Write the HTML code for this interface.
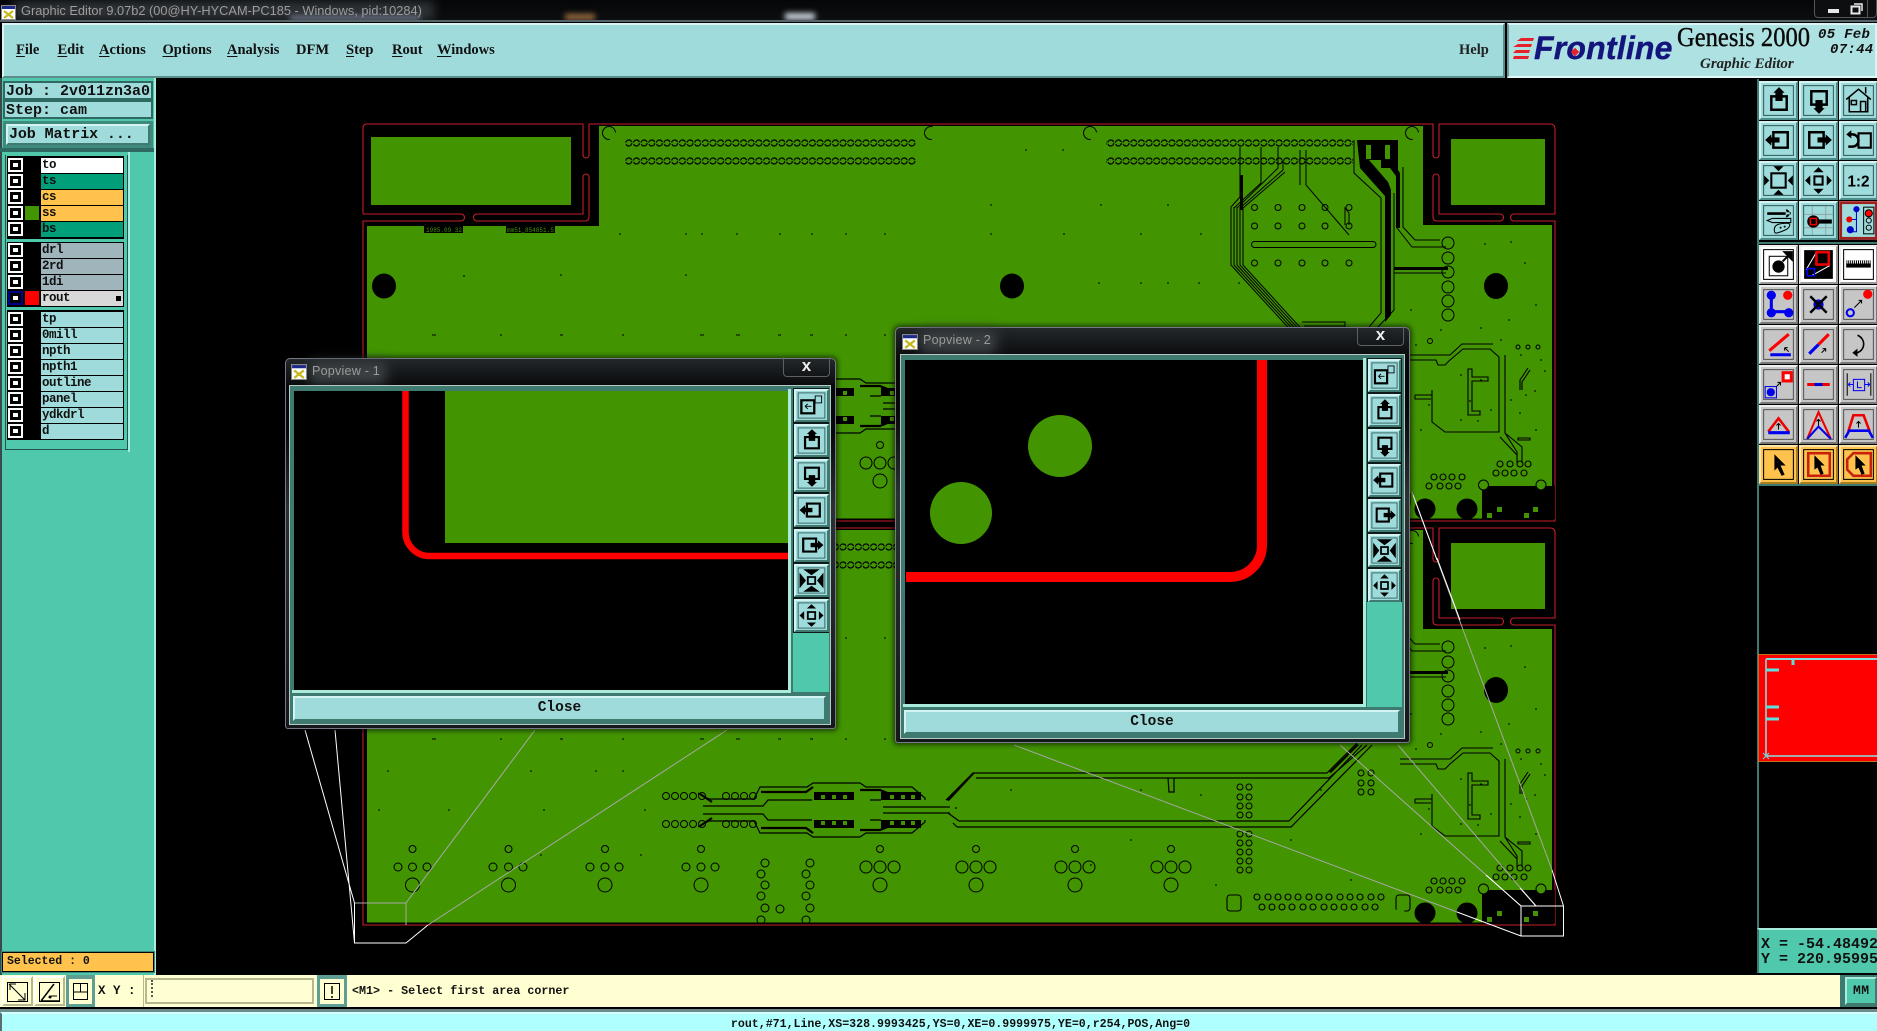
<!DOCTYPE html>
<html><head><meta charset="utf-8"><title>Graphic Editor</title>
<style>
html,body{margin:0;padding:0;background:#000;width:1877px;height:1031px;overflow:hidden}
body{position:relative;font-family:"Liberation Mono",monospace}
div,span,svg{position:absolute;box-sizing:border-box}
.m{font:bold 14.5px "Liberation Serif",serif;color:#111;top:42px;white-space:nowrap}
.m u{position:static;text-underline-offset:2px}
.mono{font-family:"Liberation Mono",monospace;font-weight:bold;color:#111;white-space:pre}
.cb{left:8px;width:15px;height:14px;background:#fff}
.cb::after{content:"";position:absolute;left:2px;top:2px;width:11px;height:10px;border:3px solid #000;background:#fff;box-sizing:border-box}
.sw{left:25px;width:14px;height:14px}
.nm{left:41px;width:82px;height:15px;background:#9fdbdb;font:bold 12.5px/15px "Liberation Mono",monospace;color:#111;padding-left:1px;white-space:pre;letter-spacing:-.5px}
.b{width:39px;height:39px;background:#9fdbdb;border:2px solid;border-color:#d4f3f3 #4f8d8d #4f8d8d #d4f3f3}
.g{background:#c6c6c6;border-color:#eee #777 #777 #eee}
.w{background:#fff;border-color:#eee #999 #999 #eee}
.o{background:#ffc34d;border-color:#ffe5a8 #a87d20 #a87d20 #ffe5a8}
.b svg{left:-2px;top:-2px;width:39px;height:39px}
.t{width:35px;height:33px;background:#9fdbdb;border:2px solid;border-color:#d4f3f3 #3e7a70 #3e7a70 #d4f3f3}
.t svg{left:-2px;top:-2px;width:35px;height:33px}
.pop{background:linear-gradient(#23282b 0,#060708 8%,#060708 20%,#2b3032 40%,#15181a 100%);border:1px solid #778;border-radius:5px 5px 3px 3px;box-shadow:0 0 5px 2px rgba(0,0,0,.55)}
.pt{font:12.6px "Liberation Sans",sans-serif;color:#9a9a9a;white-space:nowrap;letter-spacing:.2px}
.cl{background:#9fdbdb;border:2px solid;border-color:#d4f3f3 #3e7a70 #3e7a70 #d4f3f3;font:bold 14.5px "Liberation Mono",monospace;color:#111;text-align:center}
</style></head><body>

<svg width="0" height="0" style="left:0;top:0">
<defs>
<pattern id="rr" width="7.65" height="18" patternUnits="userSpaceOnUse" patternTransform="translate(625 138)"><circle cx="3.8" cy="5" r="3" fill="none" stroke="#000" stroke-width="1.200" stroke-dasharray="8 1.500"/></pattern>
<symbol id="i-up" viewBox="0 0 38 38"><rect x="4.5" y="4.5" width="29" height="29" fill="none" stroke="#2f5c5c"/><path d="M12 15h15v13H12z" fill="none" stroke="#000" stroke-width="2.400"/><path d="M19.5 6l5.500 5.500h-2v8h-7v-8h-2z"/></symbol>
<symbol id="i-down" viewBox="0 0 38 38"><rect x="4.5" y="4.5" width="29" height="29" fill="none" stroke="#2f5c5c"/><path d="M12 10h15v13H12z" fill="none" stroke="#000" stroke-width="2.400"/><path d="M19.5 32l5.500-5.500h-2v-8h-7v8h-2z"/></symbol>
<symbol id="i-left" viewBox="0 0 38 38"><rect x="4.5" y="4.5" width="29" height="29" fill="none" stroke="#2f5c5c"/><path d="M14 11h14v15H14z" fill="none" stroke="#000" stroke-width="2.400"/><path d="M6 18.500l6-5.500v3h8v5h-8v3z"/></symbol>
<symbol id="i-right" viewBox="0 0 38 38"><rect x="4.5" y="4.5" width="29" height="29" fill="none" stroke="#2f5c5c"/><path d="M10 11h14v15H10z" fill="none" stroke="#000" stroke-width="2.400"/><path d="M32 18.500l-6-5.500v3h-8v5h8v3z"/></symbol>
<symbol id="i-undo" viewBox="0 0 38 38"><rect x="4.5" y="4.5" width="29" height="29" fill="none" stroke="#2f5c5c"/><path d="M19 12h12v14H19z" fill="none" stroke="#000" stroke-width="2"/><path d="M11 13h2a5.500 5.500 0 0 1 0 12h-4" fill="none" stroke="#000" stroke-width="2.400"/><path d="M7 13l5-4v8z"/></symbol>
<symbol id="i-fit" viewBox="0 0 38 38"><rect x="4.5" y="4.5" width="29" height="29" fill="none" stroke="#2f5c5c"/><rect x="12" y="12" width="14" height="14" fill="none" stroke="#000" stroke-width="2"/><path d="M14 5h10l-5 5zM14 33h10l-5-5zM5 14v10l5-5zM33 14v10l-5-5z"/></symbol>
<symbol id="i-pan" viewBox="0 0 38 38"><rect x="4.5" y="4.5" width="29" height="29" fill="none" stroke="#2f5c5c"/><rect x="15" y="15" width="8" height="8" fill="none" stroke="#000" stroke-width="2"/><path d="M19 6l5 5H14zM19 32l5-5H14zM6 19l5-5v10zM32 19l-5-5v10z"/></symbol>
<symbol id="i-win" viewBox="0 0 38 38"><rect x="4.5" y="4.5" width="29" height="29" fill="none" stroke="#2f5c5c"/><rect x="8" y="13" width="14" height="15" fill="none" stroke="#000" stroke-width="2.500"/><rect x="23" y="8" width="7" height="8" fill="none" stroke="#000"/><path d="M12 20h7M12 20l3-3M12 20l3 3" stroke="#000" fill="none"/></symbol>
<symbol id="i-fit2" viewBox="0 0 38 38"><rect x="4.5" y="4.5" width="29" height="29" fill="none" stroke="#2f5c5c"/><rect x="15" y="15" width="8" height="8" fill="none" stroke="#000" stroke-width="2"/><path d="M10 6h18l-9 7zM10 32h18l-9-7zM6 10v18l7-9zM32 10v18l-7-9z"/></symbol>
</defs>
</svg>

<!-- main canvas -->
<svg style="left:0;top:0" width="1877" height="1031" viewBox="0 0 1877 1031">
<defs>
<g id="sec">
 <g fill="none" stroke="#000" stroke-width="1.200">
  <path d="M698 793L709 799H754L760 787H807L813 783H860L866 787H912L925 798V800"/>
  <path d="M703 806H763L768 800H812M883 807H950M870 800H881"/>
 </g>
 <g fill="none" stroke="#000" stroke-width="2.200">
  <path d="M761 792H806L813 787M860 790H880L890 794M712 802L700 794"/>
 </g>
 <path d="M814 792H854V800H814zM881 792H921V800H881z"/>
 <path d="M821 795h4v4h-4zM832 795h4v4h-4zM843 795h4v4h-4zM890 795h4v4h-4zM901 795h4v4h-4zM911 795h4v4h-4z" fill="#429400"/>
</g>
<g id="bd">
 <rect x="367" y="125" width="1185" height="393.500" fill="#429400"/>
 <rect x="363" y="122" width="236" height="104" fill="#000"/>
 <rect x="1423" y="122" width="132" height="103" fill="#000"/>
 <rect x="599" y="122" width="824" height="4" fill="#000"/>
 <rect x="371" y="137" width="200" height="68" fill="#429400"/>
 <rect x="1451" y="139" width="94" height="66" fill="#429400"/>
 <g fill="none" stroke="#c41e2a" stroke-width="1.100">
 <path d="M363 214V128q0-4 4-4H583V155a3 3 0 0 0 6 0V124H1433V155a3 3 0 0 0 6 0V124H1550q5 0 5 5V214H1514a3.500 3.500 0 0 0 0 7H1555V521H363V221H461a3.500 3.500 0 0 0 0-7H363"/>
 <path d="M477 214a3.500 3.500 0 0 0 0 7H585q4 0 4-4V177a3 3 0 0 0-6 0V214H477"/>
 <path d="M1500 214H1439V177a3 3 0 0 0-6 0V217q0 4 4 4H1500a3.500 3.500 0 0 0 0-7"/>
 </g>
 <!-- ring rows -->
 <rect x="625" y="138" width="291" height="28" fill="url(#rr)"/>
 <rect x="1106" y="138" width="247" height="28" fill="url(#rr)"/>
 <g fill="none" stroke="#000" stroke-width="1">
  <circle cx="609" cy="133" r="6.500" stroke-dasharray="22 10" transform="rotate(160 609 133)"/><circle cx="931" cy="133" r="6.500" stroke-dasharray="14 18" transform="rotate(160 931 133)"/><circle cx="1090" cy="133" r="6.500" stroke-dasharray="22 10" transform="rotate(160 1090 133)"/><circle cx="1412" cy="133" r="6.500" stroke-dasharray="22 10" transform="rotate(160 1412 133)"/>
  <circle cx="1254.500" cy="207.500" r="3"/><circle cx="1278" cy="207.500" r="3"/><circle cx="1302" cy="207.500" r="3"/><circle cx="1325" cy="207.500" r="3"/><circle cx="1349" cy="207.500" r="3"/>
  <circle cx="1254.500" cy="226" r="3"/><circle cx="1278" cy="226" r="3"/><circle cx="1302" cy="226" r="3"/><circle cx="1325" cy="226" r="3"/><circle cx="1349" cy="226" r="3"/>
  <circle cx="1254.500" cy="263" r="3"/><circle cx="1278" cy="263" r="3"/><circle cx="1302" cy="263" r="3"/><circle cx="1325" cy="263" r="3"/><circle cx="1349" cy="263" r="3"/>
  <rect x="1251.500" y="241.500" width="124.500" height="6" rx="3"/>
  <circle cx="1448" cy="243" r="6"/><circle cx="1448" cy="258" r="6"/><circle cx="1448" cy="272" r="6"/><circle cx="1448" cy="287" r="6"/><circle cx="1448" cy="301" r="6"/><circle cx="1448" cy="315" r="6"/>
  <!-- octagon bus -->
  <path d="M1231 207L1240 197V147M1234 208L1261 183V147M1237 208L1278 168V147M1240 208L1283 170V160M1243 208L1285 172"/>
  <path d="M1231 207V265L1295 335M1234 207V265L1298 335M1237 207V265L1301 335M1240 207V265L1304 335M1243 207V265L1307 335"/>
  <path d="M1302 322H1345V327M1304 326H1345"/>
  <path d="M1306 150V185L1349 235M1300 150V172V185"/>
  <path d="M1349 225V213L1345 208V225"/>
  <path d="M1354 140V173L1381 198V313L1369 327"/>
  <path d="M1394 193V310L1378 327M1403 167V227L1415 240H1440M1397 228L1412 247H1446"/>
  <path d="M1394 273H1446"/>
 </g>
 <path d="M1240 175h3v35h-3z"/>
 <path d="M1357 140H1398V170L1400 173V228H1396V176L1390 168H1381V160H1369L1388 182L1391 190V315L1385 322V196L1360 168z"/>
 <path d="M1394 267h54v3h-54z"/>
 <path d="M1366 145h5v14h-5zM1385 145h5v14h-5z" fill="#429400"/>
 <!-- holes -->
 <ellipse cx="384" cy="286" rx="12" ry="12.500"/><ellipse cx="1012" cy="286" rx="12" ry="12.500"/><ellipse cx="1496" cy="286" rx="12" ry="13"/>
 <!-- ticks -->
 <path d="M619 234h2M685 234h2M702 233v2M736 234h2M779 234h2M811 234h2M845 234h2M884 234h2M464 275v2M560 275h2M685 275h2M432 335h2M500 335h2M561 335h2M622 335h2M702 335h2M736 335h2M779 335h2M811 335h2M845 335h2M884 335h2M990 234h2M1063 234h2M1140 234h2M1200 234h2M1098 283h2M1140 283h2M1167 283h2M1198 283h2M1238 283h2M990 205h2M1100 205h2M1167 205h2M1025 150h2M1062 150h2M1484 244h2M1510 242h2M1525 262v2M1410 310h2M1440 330h2M1480 328h2M1500 340h2M1508 320h2M1535 305h2M1520 355h2M1540 360h2M1545 370v2M1460 375h2M1480 380h2M1535 390v2M1470 400v2M1510 400h2M1525 395h2M1460 420h2M1478 420v2M1490 410h2M1520 412v2M1535 430h2M1428 405h2M1420 430h2M1415 345h2" stroke="#000" fill="none"/>
 <circle cx="1430" cy="341" r="2.500" fill="none" stroke="#000"/>
 <circle cx="1518" cy="347" r="2" fill="none" stroke="#000"/><circle cx="1528" cy="347" r="2" fill="none" stroke="#000"/><circle cx="1538" cy="347" r="2" fill="none" stroke="#000"/>
 <!-- lower right traces -->
 <g fill="none" stroke="#000" stroke-width="1.100">
  <path d="M1400 355H1450L1462 344H1493"/>
  <path d="M1400 360H1436L1438 365H1445L1450 360L1463 349H1490L1499 357V432H1445L1432 422V390"/>
  <path d="M1415 395H1432M1415 395V399H1431"/>
  <path d="M1505 355V433L1517 452V463M1500 437L1517 455M1522 463V447L1505 433"/>
  <path d="M1468 369V415H1480V411H1472V381H1488V377H1472V369z"/>
  <path d="M1530 370L1522 382V390M1528 368L1520 380V390"/>
  <path d="M1518 440H1530V438H1518z"/>
  <circle cx="1500" cy="464" r="3"/><circle cx="1510" cy="464" r="3"/><circle cx="1520" cy="464" r="3"/><circle cx="1528" cy="464" r="3"/>
  <circle cx="1496" cy="473" r="3"/><circle cx="1505" cy="473" r="3"/><circle cx="1514" cy="473" r="3"/><circle cx="1524" cy="473" r="3"/>
  <circle cx="1434" cy="477" r="3"/><circle cx="1443" cy="477" r="3"/><circle cx="1452" cy="477" r="3"/><circle cx="1462" cy="477" r="3"/>
  <circle cx="1429" cy="486" r="3"/><circle cx="1440" cy="486" r="3"/><circle cx="1449" cy="486" r="3"/><circle cx="1458" cy="486" r="3"/>
  <circle cx="1257" cy="493" r="3"/><circle cx="1268" cy="493" r="3"/><circle cx="1278" cy="493" r="3"/><circle cx="1288" cy="493" r="3"/><circle cx="1298" cy="493" r="3"/><circle cx="1309" cy="493" r="3"/><circle cx="1319" cy="493" r="3"/><circle cx="1329" cy="493" r="3"/><circle cx="1340" cy="493" r="3"/><circle cx="1350" cy="493" r="3"/><circle cx="1360" cy="493" r="3"/><circle cx="1371" cy="493" r="3"/><circle cx="1381" cy="493" r="3"/>
  <circle cx="1262" cy="503" r="3"/><circle cx="1272" cy="503" r="3"/><circle cx="1282" cy="503" r="3"/><circle cx="1292" cy="503" r="3"/><circle cx="1303" cy="503" r="3"/><circle cx="1313" cy="503" r="3"/><circle cx="1324" cy="503" r="3"/><circle cx="1334" cy="503" r="3"/><circle cx="1344" cy="503" r="3"/><circle cx="1354" cy="503" r="3"/><circle cx="1365" cy="503" r="3"/><circle cx="1375" cy="503" r="3"/>
  <rect x="1227" y="491" width="14" height="16" rx="3"/><rect x="1396" y="491" width="14" height="16" rx="3" stroke-dasharray="30 8"/>
 </g>
 <!-- patch -->
 <path d="M1482 490Q1484 486 1488 486H1555V519H1482z"/>
 <circle cx="1483.500" cy="485" r="5" fill="#429400" stroke="#000"/><circle cx="1541" cy="485" r="5" fill="#429400" stroke="#000"/>
 <circle cx="1425" cy="509" r="10.500"/><circle cx="1467" cy="509" r="10.500"/>
 <path d="M1497 507h5v5h-5zM1487 513h5v5h-5zM1524 513h5v5h-5zM1533 507h5v5h-5z" fill="#429400"/>
 <!-- lower section in bottom-board coords -->
 <g transform="translate(0,-404)">
  <use href="#sec"/>
  <use href="#sec" transform="matrix(1 0 0 -1 0 1620)"/>
  <g fill="none" stroke="#000" stroke-width="1.200">
   <path d="M946 800L973 773H1327L1357 743M976 778H1329L1367 745M1168 778L1169 792H1174V778M959 821H1289L1362 745M948 813L959 821M957 827H1291L1372 745M953 823L957 827"/>
   <path d="M956 807V809"/>
  </g>
  <path d="M946 800l27-27h2l-26 28zM1329 772l28-28 2 1-28 28z"/>
  <g fill="none" stroke="#000" stroke-width="1">
   <circle cx="666" cy="796" r="3.500"/><circle cx="675" cy="796" r="3.500"/><circle cx="684" cy="796" r="3.500"/><circle cx="693" cy="796" r="3.500"/><circle cx="702" cy="796" r="3.500"/>
   <circle cx="726" cy="796" r="3.500"/><circle cx="735" cy="796" r="3.500"/><circle cx="744" cy="796" r="3.500"/><circle cx="753" cy="796" r="3.500"/>
   <circle cx="666" cy="824" r="3.500"/><circle cx="675" cy="824" r="3.500"/><circle cx="684" cy="824" r="3.500"/><circle cx="693" cy="824" r="3.500"/><circle cx="702" cy="824" r="3.500"/>
   <circle cx="726" cy="824" r="3.500"/><circle cx="735" cy="824" r="3.500"/><circle cx="744" cy="824" r="3.500"/><circle cx="753" cy="824" r="3.500"/>
   <circle cx="412.500" cy="849" r="3.500"/><circle cx="398" cy="867" r="4"/><circle cx="412.500" cy="867" r="4"/><circle cx="427" cy="867" r="4"/><ellipse cx="412.500" cy="885" rx="7" ry="7"/>
   <circle cx="508.500" cy="849" r="3.500"/><circle cx="493" cy="867" r="4"/><circle cx="508.500" cy="867" r="4"/><circle cx="523" cy="867" r="4"/><ellipse cx="508.500" cy="885" rx="7" ry="7"/>
   <circle cx="605" cy="849" r="3.500"/><circle cx="590" cy="867" r="4"/><circle cx="605" cy="867" r="4"/><circle cx="619" cy="867" r="4"/><ellipse cx="605" cy="885" rx="7" ry="7"/>
   <circle cx="701" cy="849" r="3.500"/><circle cx="686" cy="867" r="4"/><circle cx="701" cy="867" r="4"/><circle cx="715" cy="867" r="4"/><ellipse cx="701" cy="885" rx="7" ry="7"/>
   <circle cx="880" cy="849" r="3.500"/><circle cx="866" cy="867" r="6"/><circle cx="880" cy="867" r="6"/><circle cx="894" cy="867" r="6"/><ellipse cx="880" cy="885" rx="7" ry="7"/>
   <circle cx="976" cy="849" r="3.500"/><circle cx="962" cy="867" r="6"/><circle cx="976" cy="867" r="6"/><circle cx="990" cy="867" r="6"/><ellipse cx="976" cy="885" rx="7" ry="7"/>
   <circle cx="1075" cy="849" r="3.500"/><circle cx="1061" cy="867" r="6"/><circle cx="1075" cy="867" r="6"/><circle cx="1089" cy="867" r="6"/><ellipse cx="1075" cy="885" rx="7" ry="7"/>
   <circle cx="1171" cy="849" r="3.500"/><circle cx="1157" cy="867" r="6"/><circle cx="1171" cy="867" r="6"/><circle cx="1185" cy="867" r="6"/><ellipse cx="1171" cy="885" rx="7" ry="7"/>
   <circle cx="765" cy="863" r="4"/><circle cx="761" cy="874" r="4"/><circle cx="765" cy="885" r="4"/><circle cx="761" cy="896" r="4"/><circle cx="765" cy="908" r="4"/><circle cx="761" cy="920" r="4"/><circle cx="780" cy="909" r="4"/>
   <circle cx="810" cy="863" r="4"/><circle cx="806" cy="874" r="4"/><circle cx="810" cy="885" r="4"/><circle cx="806" cy="896" r="4"/><circle cx="810" cy="908" r="4"/><circle cx="806" cy="920" r="4"/>
   <circle cx="1240" cy="787" r="3"/><circle cx="1249" cy="787" r="3"/><circle cx="1240" cy="797" r="3"/><circle cx="1249" cy="797" r="3"/><circle cx="1240" cy="806" r="3"/><circle cx="1249" cy="806" r="3"/><circle cx="1240" cy="815" r="3"/><circle cx="1249" cy="815" r="3"/>
   <circle cx="1240" cy="834" r="3"/><circle cx="1249" cy="834" r="3"/><circle cx="1240" cy="843" r="3"/><circle cx="1249" cy="843" r="3"/><circle cx="1240" cy="852" r="3"/><circle cx="1249" cy="852" r="3"/><circle cx="1240" cy="861" r="3"/><circle cx="1249" cy="861" r="3"/><circle cx="1240" cy="870" r="3"/><circle cx="1249" cy="870" r="3"/>
   <circle cx="1361" cy="773" r="3"/><circle cx="1371" cy="773" r="3"/><circle cx="1361" cy="783" r="3"/><circle cx="1371" cy="783" r="3"/><circle cx="1361" cy="792" r="3"/><circle cx="1371" cy="792" r="3"/>
  </g>
  <path d="M434 739h2M500 739h2M560 739h2M622 739h2M700 739h2M738 739h2M778 739h2M810 739h2M845 739h2M884 739h2M387 771h2M530 771h2M595 771h2M622 771h2M378 810h2M448 810h2M543 810h2M644 810h2M540 855h2M640 855h2M1010 790h2M1140 790h2M1200 795h2M1320 790h2M1090 865h2M1130 840h2M1290 840h2M1215 885h2M1350 880h2" stroke="#000" fill="none"/>
 </g>
 <rect x="424" y="226" width="39" height="7" fill="#000"/><rect x="506" y="226" width="49" height="7" fill="#000"/>
 <text x="426" y="232" font-family="Liberation Mono,monospace" font-size="6" fill="#429400">1985.09 32</text>
 <text x="507" y="232" font-family="Liberation Mono,monospace" font-size="6" fill="#429400">mm51_854851.5</text>
</g>
</defs>
<rect width="1877" height="1031" fill="#000"/>
<use href="#bd"/>
<use href="#bd" y="404"/>
<!-- selection lines -->
<g fill="none" stroke-width="1">
 <path d="M535 730L406 903M727 730L428 925M1014 745L1457 912M1340 745L1521 906M1398 745L1536 906M1412 492L1552 870" stroke="#a8a8a8"/>
 <path d="M354.500 903H406V925" stroke="#a8a8a8"/>
 <path d="M305 730L354.500 903M335 730L354.500 943H406L428 925M354.500 903V943" stroke="#fff"/>
 <path d="M1521 906H1563.500V936H1521zM1457 912L1521 936M1552 870L1563.500 906M1486 875L1521 906M1520 888L1536 906" stroke="#fff"/>
 <path d="M1413 495L1437 560M1437 558L1460 620" stroke="#fff"/>
</g>
</svg>

<!-- title bar -->
<div style="left:0;top:0;width:1877px;height:21px;background:linear-gradient(#050607,#0c0e10)"></div>
<div style="left:14px;top:1px;width:420px;height:19px;background:#2e3236;filter:blur(5px)"></div>
<div style="left:565px;top:14px;width:30px;height:6px;background:#a07040;filter:blur(3px)"></div>
<div style="left:290px;top:16px;width:130px;height:4px;background:#7f8a9f;filter:blur(3px)"></div>
<div style="left:785px;top:13px;width:30px;height:7px;background:#cfd8e0;filter:blur(3px)"></div>
<div style="left:1860px;top:3px;width:14px;height:12px;background:#24324a;filter:blur(4px)"></div>
<svg style="left:1px;top:5px" width="15" height="15" viewBox="0 0 15 15"><rect x=".5" y=".5" width="14" height="14" fill="#fff" stroke="#888"/><rect x="1" y="1" width="13" height="3" fill="#1a2a88"/><path d="M3 6l9 7M12 6l-9 7" stroke="#c8b820" stroke-width="2.200"/></svg>
<div style="left:21px;top:3px;font:12.800px 'Liberation Sans',sans-serif;color:#9c9c9c;white-space:nowrap">Graphic Editor 9.07b2 (00@HY-HYCAM-PC185 - Windows, pid:10284)</div>
<div style="left:1814px;top:-1px;width:63px;height:19px;border:1px solid #555;border-radius:0 0 4px 4px;background:#0c0e10"></div>
<div style="left:1828px;top:9px;width:11px;height:4px;background:#e8e8e8"></div>
<svg style="left:1849px;top:2px" width="14" height="14"><rect x="2.500" y="4.500" width="8" height="7" fill="none" stroke="#e8e8e8" stroke-width="2"/><path d="M5 2h8v7" fill="none" stroke="#e8e8e8" stroke-width="1.500"/></svg>
<div style="left:1867px;top:-1px;width:1px;height:19px;background:#555"></div>

<!-- menu bar -->
<div style="left:0;top:20px;width:1877px;height:59px;background:#000;border-top:2px solid #55636a"></div>
<div style="left:2px;top:23px;width:1503px;height:55px;background:#9fdbdb;border:2px solid;border-color:#d8f5f5 #5c8c8c #5c8c8c #d8f5f5"></div>
<div style="left:1507px;top:23px;width:370px;height:55px;background:#aee1e1;border:2px solid;border-color:#d8f5f5 #d8f5f5 #e4f8f8 #6b9a9a"></div>
<div class="m" style="left:16px"><u>F</u>ile</div>
<div class="m" style="left:57.500px"><u>E</u>dit</div>
<div class="m" style="left:99px"><u>A</u>ctions</div>
<div class="m" style="left:162.500px"><u>O</u>ptions</div>
<div class="m" style="left:227px"><u>A</u>nalysis</div>
<div class="m" style="left:296px">DFM</div>
<div class="m" style="left:346px"><u>S</u>tep</div>
<div class="m" style="left:392px"><u>R</u>out</div>
<div class="m" style="left:437px"><u>W</u>indows</div>
<div class="m" style="left:1459px;font-weight:bold;color:#222">Help</div>

<!-- logo -->
<svg style="left:1513px;top:37px" width="22" height="24" viewBox="0 0 22 24"><path d="M8 1h13l-1 3H4zM5 7h14l-1 3H0zM3 13h14l-1 3H0zM1 19h15l-1 3H0z" fill="#e8202a"/></svg>
<div style="left:1534px;top:30px;font:italic bold 32px 'Liberation Sans',sans-serif;color:#14147d;white-space:nowrap;letter-spacing:.2px;-webkit-text-stroke:.4px #14147d">Frontline</div>
<div style="left:1572px;top:49px;width:6px;height:6px;background:#e8202a;transform:rotate(45deg)"></div>
<div style="left:1677px;top:22px;font:27px 'Liberation Serif',serif;color:#0a0a0a;white-space:nowrap;-webkit-text-stroke:.4px #0a0a0a;transform:scaleX(.91);transform-origin:0 0">Genesis 2000</div>
<div style="left:1700px;top:56px;font:italic bold 15px 'Liberation Serif',serif;color:#222;white-space:nowrap">Graphic Editor</div>
<div class="mono" style="left:1818px;top:27px;font-size:14px;font-style:italic;letter-spacing:.3px">05 Feb</div>
<div class="mono" style="left:1830px;top:42px;font-size:14px;font-style:italic;letter-spacing:.3px">07:44</div>

<!-- left panel -->
<div style="left:0;top:78px;width:156px;height:897px;background:#50c8ac;border-left:2px solid #3a4a4a;border-right:2px solid #a9ecdc"></div>
<div style="left:3px;top:81px;width:150px;height:19px;background:#9fdbdb;border:2px solid #2f6a62"></div>
<div class="mono" style="left:6px;top:82px;font-size:15px;line-height:19px">Job : 2v011zn3a0</div>
<div style="left:3px;top:100px;width:150px;height:19px;background:#9fdbdb;border:2px solid #2f6a62"></div>
<div class="mono" style="left:6px;top:101px;font-size:15px;line-height:19px">Step: cam</div>
<div style="left:3px;top:121px;width:150px;height:27px;background:#3e8a7c"></div>
<div style="left:6px;top:124px;width:144px;height:21px;background:#9fdbdb;border:2px solid;border-color:#d4f3f3 #3e7a70 #3e7a70 #d4f3f3"></div>
<div class="mono" style="left:9px;top:124px;font-size:15px;line-height:21px;letter-spacing:-.1px">Job Matrix ...</div>
<div style="left:0;top:148px;width:154px;height:4px;background:#2f6a62"></div>
<div style="left:5px;top:155px;width:123px;height:295px;background:#50c8ac;border:1px solid #25534c;border-top:0"></div>
<div style="left:128px;top:152px;width:26px;height:300px;background:#50c8ac;border-left:2px solid #a9ecdc"></div>
<div style="left:7px;top:156px;width:117px;height:83px;background:#000"></div>
<div style="left:7px;top:242px;width:117px;height:65px;background:#000"></div>
<div style="left:7px;top:310px;width:117px;height:130px;background:#000"></div>
<div class="cb" style="top:158px"></div><div class="nm" style="top:158px;background:#fff">to</div>
<div class="cb" style="top:174px"></div><div class="nm" style="top:174px;background:#009f7a">ts</div>
<div class="cb" style="top:190px"></div><div class="nm" style="top:190px;background:#ffc34d">cs</div>
<div class="cb" style="top:206px"></div><div class="sw" style="top:206px;background:#429400"></div><div class="nm" style="top:206px;background:#ffc34d">ss</div>
<div class="cb" style="top:222px"></div><div class="nm" style="top:222px;background:#009f7a">bs</div>
<div class="cb" style="top:243px"></div><div class="nm" style="top:243px;background:#a0b4bc">drl</div>
<div class="cb" style="top:259px"></div><div class="nm" style="top:259px;background:#a0b4bc">2rd</div>
<div class="cb" style="top:275px"></div><div class="nm" style="top:275px;background:#a0b4bc">1di</div>
<div class="cb" style="top:291px;background:#00008b"></div><div class="sw" style="top:291px;background:#f00"></div><div class="nm" style="top:291px;background:#d9d9d9">rout</div>
<div style="left:116px;top:296px;width:5px;height:5px;background:#000;border:1px solid #000;outline:1px solid #d9d9d9"></div>
<div class="cb" style="top:312px"></div><div class="nm" style="top:312px">tp</div>
<div class="cb" style="top:328px"></div><div class="nm" style="top:328px">0mill</div>
<div class="cb" style="top:344px"></div><div class="nm" style="top:344px">npth</div>
<div class="cb" style="top:360px"></div><div class="nm" style="top:360px">npth1</div>
<div class="cb" style="top:376px"></div><div class="nm" style="top:376px">outline</div>
<div class="cb" style="top:392px"></div><div class="nm" style="top:392px">panel</div>
<div class="cb" style="top:408px"></div><div class="nm" style="top:408px">ydkdrl</div>
<div class="cb" style="top:424px"></div><div class="nm" style="top:424px">d</div>
<div style="left:2px;top:952px;width:152px;height:20px;background:#ffc34d;border:1px solid #000;outline:1px solid #3e8a7c"></div>
<div class="mono" style="left:7px;top:953px;font-size:11.500px;line-height:18px">Selected : 0</div>

<!-- right palette -->
<div style="left:1757px;top:79px;width:120px;height:406px;background:#000"></div>
<div style="left:1757px;top:79px;width:2px;height:850px;background:#3e7a70"></div>
<div style="left:1757px;top:242px;width:120px;height:2px;background:#3e7a70"></div>
<div style="left:1757px;top:484px;width:120px;height:2px;background:#3e7a70"></div>

<div class="b" style="left:1759px;top:81px"><svg><use href="#i-up"/></svg></div>
<div class="b" style="left:1799px;top:81px"><svg><use href="#i-down"/></svg></div>
<div class="b" style="left:1839px;top:81px"><svg viewBox="0 0 38 38"><rect x="4.500" y="4.500" width="29" height="29" fill="none" stroke="#2f5c5c"/><path d="M7 18L19 8L31 18M10 16V30H28V16M12 19h5v4h-5zM21 20h5v10h-5zM26 12V6" fill="none" stroke="#000" stroke-width="1.500"/></svg></div>
<div class="b" style="left:1759px;top:121px"><svg><use href="#i-left"/></svg></div>
<div class="b" style="left:1799px;top:121px"><svg><use href="#i-right"/></svg></div>
<div class="b" style="left:1839px;top:121px"><svg><use href="#i-undo"/></svg></div>
<div class="b" style="left:1759px;top:161px"><svg><use href="#i-fit"/></svg></div>
<div class="b" style="left:1799px;top:161px"><svg><use href="#i-pan"/></svg></div>
<div class="b" style="left:1839px;top:161px"><svg viewBox="0 0 38 38"><rect x="4.500" y="4.500" width="29" height="29" fill="none" stroke="#2f5c5c"/><text x="19" y="25" text-anchor="middle" font-family="Liberation Sans,sans-serif" font-weight="bold" font-size="15">1:2</text></svg></div>
<div class="b" style="left:1759px;top:201px"><svg viewBox="0 0 38 38"><rect x="4.500" y="4.500" width="29" height="29" fill="none" stroke="#2f5c5c"/><path d="M8 11h18v2.500H8zM26 8a4 4 0 1 1 0 8l1-3h4v-2h-4z"/><path d="M8 19l5-2h18v4H13z" fill="none" stroke="#000"/><path d="M15 29q-1-6 7-7 8-1 8 1 0 3-4 5t-8 3q-3 1-3-2z" fill="none" stroke="#000"/><circle cx="21" cy="26" r="1"/><circle cx="25" cy="25" r="1"/></svg></div>
<div class="b" style="left:1799px;top:201px"><svg viewBox="0 0 38 38"><rect x="4.500" y="4.500" width="29" height="29" fill="none" stroke="#2f5c5c"/><path d="M13 5v28M26 5v28M5 13h28M5 26h28" stroke="#8fa8a8"/><circle cx="14" cy="20" r="6"/><rect x="11" y="17" width="6" height="6" fill="none" stroke="#e00" stroke-width="1.500"/><rect x="19" y="18" width="13" height="4"/></svg></div>
<div class="b" style="left:1839px;top:201px;border-color:#b84a4a #8a3030 #8a3030 #b84a4a;background:#9fdbdb"><svg viewBox="0 0 38 38"><rect x="2" y="2" width="34" height="34" fill="none" stroke="#a02020" stroke-width="2"/><rect x="24" y="6" width="10" height="26" fill="none" stroke="#000"/><circle cx="29" cy="12" r="3.500" fill="#f00" stroke="#000"/><circle cx="29" cy="19" r="2.500" fill="none" stroke="#000"/><circle cx="29" cy="26" r="2.500" fill="none" stroke="#000"/><path d="M17 8V30H11M10 18H17M17 8" stroke="#00c" fill="none"/><circle cx="17" cy="8" r="3" fill="#00c"/><circle cx="10" cy="18" r="3" fill="#e00"/><circle cx="11" cy="28" r="3.500" fill="#00c"/></svg></div>

<div class="b w" style="left:1759px;top:245px"><svg viewBox="0 0 38 38"><rect x="4.500" y="4.500" width="29" height="29" fill="none" stroke="#000"/><rect x="10" y="11" width="18" height="19" fill="none" stroke="#000"/><circle cx="19" cy="21" r="6"/><path d="M23 16L31 8M25 7h7v7z" stroke="#000" stroke-width="2"/></svg></div>
<div class="b w" style="left:1799px;top:245px"><svg viewBox="0 0 38 38"><rect x="5" y="5" width="28" height="28" fill="#000"/><path d="M7 24L17 7M12 30L30 20" stroke="#fff"/><rect x="17" y="7" width="12" height="12" fill="none" stroke="#e00" stroke-width="2.500"/><rect x="8" y="23" width="7" height="7" fill="none" stroke="#00f" stroke-width="1.500"/></svg></div>
<div class="b w" style="left:1839px;top:245px"><svg viewBox="0 0 38 38"><rect x="4.500" y="4.500" width="29" height="29" fill="none" stroke="#000"/><rect x="7" y="15" width="24" height="7"/><path d="M8 14.500v3M10 14.500v3M12 14.500v3M14 14.500v3M16 14.500v3M18 14.500v3M20 14.500v3M22 14.500v3M24 14.500v3M26 14.500v3M28 14.500v3M30 14.500v3" stroke="#fff" transform="translate(0 0.500)"/></svg></div>

<div class="b g" style="left:1759px;top:285px"><svg viewBox="0 0 38 38"><rect x="4.500" y="4.500" width="29" height="29" fill="none" stroke="#555"/><path d="M12 11V26H29" fill="none" stroke="#00e" stroke-width="3"/><circle cx="12" cy="10" r="4.500" fill="#00e"/><circle cx="12" cy="27" r="4.500" fill="#00e"/><circle cx="29" cy="27" r="4.500" fill="#00e"/><circle cx="28" cy="10" r="4.500" fill="#f00"/></svg></div>
<div class="b g" style="left:1799px;top:285px"><svg viewBox="0 0 38 38"><rect x="4.500" y="4.500" width="29" height="29" fill="none" stroke="#555"/><circle cx="19" cy="19" r="5" fill="#00c"/><path d="M11 11L27 27M27 11L11 27" stroke="#000" stroke-width="2.400"/></svg></div>
<div class="b g" style="left:1839px;top:285px"><svg viewBox="0 0 38 38"><rect x="4.500" y="4.500" width="29" height="29" fill="none" stroke="#555"/><circle cx="11" cy="27" r="3.500" fill="none" stroke="#00e" stroke-width="2"/><circle cx="28" cy="9" r="4.500" fill="#f00"/><path d="M15 22L22 15M19 15h3v3" stroke="#000" fill="none"/></svg></div>

<div class="b g" style="left:1759px;top:325px"><svg viewBox="0 0 38 38"><rect x="4.500" y="4.500" width="29" height="29" fill="none" stroke="#555"/><path d="M10 25L29 9" stroke="#f00" stroke-width="3"/><path d="M11 29H31" stroke="#00e" stroke-width="3"/><path d="M25 22l4 4M25 22h3M25 22v3" stroke="#000" fill="none"/></svg></div>
<div class="b g" style="left:1799px;top:325px"><svg viewBox="0 0 38 38"><rect x="4.500" y="4.500" width="29" height="29" fill="none" stroke="#555"/><path d="M29 9L19 19" stroke="#f00" stroke-width="3"/><path d="M19 19L10 28" stroke="#00e" stroke-width="3"/><path d="M22 27l4-4M23 23h3v3" stroke="#000" fill="none"/></svg></div>
<div class="b g" style="left:1839px;top:325px"><svg viewBox="0 0 38 38"><rect x="4.500" y="4.500" width="29" height="29" fill="none" stroke="#555"/><path d="M18 10a9 9 0 0 1 0 17h-3" fill="none" stroke="#000" stroke-width="1.500"/><path d="M13 27l5-4v8z"/></svg></div>

<div class="b g" style="left:1759px;top:365px"><svg viewBox="0 0 38 38"><rect x="4.500" y="4.500" width="29" height="29" fill="none" stroke="#555"/><rect x="6" y="21" width="11" height="11" fill="none" stroke="#00e"/><circle cx="11.500" cy="26.500" r="4" fill="#00e"/><rect x="22" y="6" width="11" height="11" fill="#f00"/><rect x="25" y="9" width="5" height="5" fill="#fff"/><path d="M17 21l4-4M18 17h3v3" stroke="#000" fill="none"/></svg></div>
<div class="b g" style="left:1799px;top:365px"><svg viewBox="0 0 38 38"><rect x="4.500" y="4.500" width="29" height="29" fill="none" stroke="#555"/><path d="M8 19H15M23 19H30" stroke="#e00" stroke-width="3"/><path d="M15 19H23" stroke="#00c" stroke-width="3"/></svg></div>
<div class="b g" style="left:1839px;top:365px"><svg viewBox="0 0 38 38"><rect x="4.500" y="4.500" width="29" height="29" fill="none" stroke="#555"/><path d="M8 8V30M31 8V30" stroke="#000"/><rect x="14" y="14" width="11" height="11" fill="none" stroke="#00e"/><path d="M9 19H14M25 19H30M9 19l2-2M9 19l2 2M30 19l-2-2M30 19l-2 2M18 16v6h4" stroke="#00e" fill="none"/></svg></div>

<div class="b g" style="left:1759px;top:405px"><svg viewBox="0 0 38 38"><rect x="4.500" y="4.500" width="29" height="29" fill="none" stroke="#555"/><path d="M9 26L19 13L29 26" fill="none" stroke="#e00" stroke-width="2.500"/><path d="M9 27H30" stroke="#00e" stroke-width="3"/><path d="M19 24v-5M17 20l2-2 2 2" stroke="#000" fill="none"/></svg></div>
<div class="b g" style="left:1799px;top:405px"><svg viewBox="0 0 38 38"><rect x="4.500" y="4.500" width="29" height="29" fill="none" stroke="#555"/><path d="M8 33L19 7L31 33" fill="none" stroke="#e00" stroke-width="2"/><path d="M8 33L19 21L31 33" fill="none" stroke="#00e" stroke-width="2"/><path d="M19 20v-6M17 16l2-2 2 2" stroke="#000" fill="none"/></svg></div>
<div class="b g" style="left:1839px;top:405px"><svg viewBox="0 0 38 38"><rect x="4.500" y="4.500" width="29" height="29" fill="none" stroke="#555"/><path d="M9 26L14 10H24L30 26" fill="none" stroke="#e00" stroke-width="2.500"/><path d="M6 32L10 25H29L33 32" fill="none" stroke="#00e" stroke-width="2.500"/><path d="M19 22v-6M17 18l2-2 2 2" stroke="#000" fill="none"/></svg></div>

<div class="b o" style="left:1759px;top:445px"><svg viewBox="0 0 38 38"><rect x="4.500" y="4.500" width="29" height="29" fill="none" stroke="#000"/><path d="M15 9L26 20L21 20L25 29L22 30L18 22L15 25z"/></svg></div>
<div class="b o" style="left:1799px;top:445px"><svg viewBox="0 0 38 38"><rect x="4.500" y="4.500" width="29" height="29" fill="none" stroke="#000"/><rect x="9" y="8" width="21" height="22" fill="none" stroke="#c8200a" stroke-width="2.500"/><path d="M15 10L25 20L21 20L24 28L21 29L18 22L15 24z"/></svg></div>
<div class="b o" style="left:1839px;top:445px"><svg viewBox="0 0 38 38"><rect x="4.500" y="4.500" width="29" height="29" fill="none" stroke="#000"/><path d="M14 8H31V30H14L8 24V14z" fill="none" stroke="#c8200a" stroke-width="2.500"/><path d="M16 10L26 20L22 20L25 28L22 29L19 22L16 24z"/></svg></div>

<!-- minimap -->
<svg style="left:1758px;top:654px" width="119" height="108" viewBox="0 0 119 108"><rect x=".5" y=".5" width="125" height="107" fill="#f00" stroke="#c07020"/><path d="M8 5H119" stroke="#7fdcdc" stroke-width="2"/><path d="M8 5V102H119" fill="none" stroke="#aaa" stroke-width="2"/><path d="M8 16H21M8 53H21M8 65H21" stroke="#5fe0e0" stroke-width="3"/><path d="M35 5V11" stroke="#5fe0e0" stroke-width="3"/><path d="M5 99l6 6M11 99l-6 6" stroke="#5fe0e0"/></svg>
<div style="left:1757px;top:928px;width:120px;height:45px;background:#50c8ac;border-top:2px solid #a9ecdc;border-left:2px solid #3e7a70"></div>
<div class="mono" style="left:1761px;top:937px;font-size:15px;line-height:15px">X = -54.48492</div>
<div class="mono" style="left:1761px;top:952px;font-size:15px;line-height:15px">Y = 220.95995</div>

<!-- popup 1 -->
<div class="pop" style="left:285px;top:358px;width:551px;height:371px"></div>
<div style="left:310px;top:362px;width:76px;height:22px;background:#3d4245;filter:blur(6px)"></div>
<svg style="left:291px;top:364px" width="16" height="16" viewBox="0 0 15 15"><rect x=".5" y=".5" width="14" height="14" fill="#fff" stroke="#888"/><rect x="1" y="1" width="13" height="3" fill="#1a2a88"/><path d="M3 6l9 7M12 6l-9 7" stroke="#c8b820" stroke-width="2.200"/></svg>
<div class="pt" style="left:312px;top:364px">Popview - 1</div>
<div style="left:783px;top:357px;width:47px;height:20px;border:1px solid #5a6264;border-top:0;border-radius:0 0 4px 4px"></div>
<div style="left:783px;top:356px;width:47px;height:20px;font:bold 17px/20px 'Liberation Sans',sans-serif;color:#eee;text-align:center">x</div>
<div style="left:289px;top:385px;width:542px;height:340px;background:#3e7a70;border:1px solid #b8c8c4"></div>
<div style="left:294px;top:391px;width:494px;height:299px;background:#000"></div>
<svg style="left:294px;top:391px" width="494" height="299" viewBox="294 391 494 299"><rect x="445" y="391" width="343" height="152" fill="#429400"/><path d="M405.500 391V532A24 24 0 0 0 430 556H788" fill="none" stroke="#f00" stroke-width="6.500"/></svg>
<div style="left:292px;top:690px;width:499px;height:3px;background:#a9ecdc"></div>
<div style="left:788px;top:389px;width:3px;height:304px;background:#a9ecdc"></div>
<div style="left:793px;top:388px;width:36px;height:246px;background:#0f1a1a"></div>
<div class="t" style="left:794px;top:389px"><svg viewBox="0 0 38 38" preserveAspectRatio="none"><use href="#i-win"/></svg></div>
<div class="t" style="left:794px;top:424px"><svg viewBox="0 0 38 38" preserveAspectRatio="none"><use href="#i-up"/></svg></div>
<div class="t" style="left:794px;top:459px"><svg viewBox="0 0 38 38" preserveAspectRatio="none"><use href="#i-down"/></svg></div>
<div class="t" style="left:794px;top:494px"><svg viewBox="0 0 38 38" preserveAspectRatio="none"><use href="#i-left"/></svg></div>
<div class="t" style="left:794px;top:529px"><svg viewBox="0 0 38 38" preserveAspectRatio="none"><use href="#i-right"/></svg></div>
<div class="t" style="left:794px;top:564px"><svg viewBox="0 0 38 38" preserveAspectRatio="none"><use href="#i-fit2"/></svg></div>
<div class="t" style="left:794px;top:599px"><svg viewBox="0 0 38 38" preserveAspectRatio="none"><use href="#i-pan"/></svg></div>
<div style="left:793px;top:633px;width:36px;height:59px;background:#50c8ac"></div>
<div class="cl" style="left:293px;top:696px;width:533px;height:25px;line-height:21px">Close</div>

<!-- popup 2 -->
<div class="pop" style="left:895px;top:327px;width:515px;height:416px"></div>
<div style="left:920px;top:331px;width:76px;height:22px;background:#3d4245;filter:blur(6px)"></div>
<svg style="left:902px;top:334px" width="16" height="16" viewBox="0 0 15 15"><rect x=".5" y=".5" width="14" height="14" fill="#fff" stroke="#888"/><rect x="1" y="1" width="13" height="3" fill="#1a2a88"/><path d="M3 6l9 7M12 6l-9 7" stroke="#c8b820" stroke-width="2.200"/></svg>
<div class="pt" style="left:923px;top:333px">Popview - 2</div>
<div style="left:1357px;top:326px;width:47px;height:20px;border:1px solid #5a6264;border-top:0;border-radius:0 0 4px 4px"></div>
<div style="left:1357px;top:325px;width:47px;height:20px;font:bold 17px/20px 'Liberation Sans',sans-serif;color:#eee;text-align:center">x</div>
<div style="left:900px;top:354px;width:505px;height:385px;background:#3e7a70;border:1px solid #b8c8c4"></div>
<div style="left:905px;top:360px;width:458px;height:344px;background:#000"></div>
<svg style="left:905px;top:360px" width="458" height="344" viewBox="905 360 458 344"><ellipse cx="1060" cy="446" rx="32" ry="31" fill="#429400"/><ellipse cx="961" cy="513" rx="31" ry="31" fill="#429400"/><path d="M1262 360V545A32 32 0 0 1 1230 577H906" fill="none" stroke="#f00" stroke-width="10"/></svg>
<div style="left:903px;top:704px;width:463px;height:3px;background:#a9ecdc"></div>
<div style="left:1363px;top:358px;width:3px;height:349px;background:#a9ecdc"></div>
<div style="left:1367px;top:358px;width:35px;height:245px;background:#0f1a1a"></div>
<div class="t" style="left:1368px;top:359px;width:33px"><svg style="width:33px" viewBox="0 0 38 38" preserveAspectRatio="none"><use href="#i-win"/></svg></div>
<div class="t" style="left:1368px;top:394px;width:33px"><svg style="width:33px" viewBox="0 0 38 38" preserveAspectRatio="none"><use href="#i-up"/></svg></div>
<div class="t" style="left:1368px;top:429px;width:33px"><svg style="width:33px" viewBox="0 0 38 38" preserveAspectRatio="none"><use href="#i-down"/></svg></div>
<div class="t" style="left:1368px;top:464px;width:33px"><svg style="width:33px" viewBox="0 0 38 38" preserveAspectRatio="none"><use href="#i-left"/></svg></div>
<div class="t" style="left:1368px;top:499px;width:33px"><svg style="width:33px" viewBox="0 0 38 38" preserveAspectRatio="none"><use href="#i-right"/></svg></div>
<div class="t" style="left:1368px;top:534px;width:33px"><svg style="width:33px" viewBox="0 0 38 38" preserveAspectRatio="none"><use href="#i-fit2"/></svg></div>
<div class="t" style="left:1368px;top:569px;width:33px"><svg style="width:33px" viewBox="0 0 38 38" preserveAspectRatio="none"><use href="#i-pan"/></svg></div>
<div style="left:1367px;top:602px;width:35px;height:105px;background:#50c8ac"></div>
<div class="cl" style="left:904px;top:710px;width:496px;height:24px;line-height:20px">Close</div>

<!-- bottom bar -->
<div style="left:0;top:975px;width:1877px;height:32px;background:#ffffd2"></div>
<div style="left:0;top:1007px;width:1877px;height:2px;background:#000"></div>
<div style="left:0;top:1009px;width:1877px;height:3px;background:#6a8c8c"></div>
<div style="left:0;top:1012px;width:1877px;height:19px;background:#b0ffff;border-top:2px solid #d4ffff;border-left:2px solid #5a6c6c"></div>
<div class="mono" style="left:0;top:1018px;width:1921px;text-align:center;font-size:11.600px;line-height:14px">rout,#71,Line,XS=328.9993425,YS=0,XE=0.9999975,YE=0,r254,POS,Ang=0</div>

<div style="left:2px;top:976px;width:31px;height:30px;border:2px solid;border-color:#fff #b8b890 #b8b890 #fff;background:#ffffd2"></div>
<svg style="left:2px;top:976px" width="31" height="30" viewBox="0 0 31 30"><rect x="5.500" y="6.500" width="20" height="19" fill="none" stroke="#000"/><path d="M7 8L23 24M23 17v7h-7M8 14V8h6" fill="none" stroke="#000"/></svg>
<div style="left:34px;top:976px;width:31px;height:30px;border:2px solid;border-color:#fff #b8b890 #b8b890 #fff;background:#ffffd2"></div>
<svg style="left:34px;top:976px" width="31" height="30" viewBox="0 0 31 30"><rect x="5.500" y="6.500" width="20" height="19" fill="none" stroke="#000"/><path d="M7 25L20 8M7 25H25" fill="none" stroke="#000" stroke-width="1.500"/><path d="M17 20h6" stroke="#000"/><circle cx="16" cy="21" r="1.500"/></svg>
<div style="left:66px;top:975px;width:29px;height:32px;background:#5f9e92"></div>
<div style="left:69px;top:979px;width:23px;height:25px;background:#ffffd2"></div>
<svg style="left:69px;top:979px" width="23" height="25" viewBox="0 0 23 25"><rect x="4.500" y="4.500" width="14" height="16" fill="none" stroke="#000"/><path d="M4.500 13H18.500M11.500 4.500V13" stroke="#000"/></svg>
<div class="mono" style="left:98px;top:983px;font-size:12.500px;line-height:16px">X Y :</div>
<div style="left:143px;top:975px;width:1px;height:32px;background:#b8b890"></div>
<div style="left:145px;top:978px;width:169px;height:26px;border:2px solid #b8b890;background:#ffffd2"></div>
<div style="left:151px;top:980px;width:2px;height:17px;border-left:2px dotted #555"></div>
<div style="left:317px;top:975px;width:30px;height:32px;background:#5f9e92"></div>
<div style="left:320px;top:979px;width:24px;height:25px;background:#ffffd2"></div>
<svg style="left:320px;top:979px" width="24" height="25" viewBox="0 0 24 25"><rect x="4.500" y="4.500" width="15" height="16" fill="none" stroke="#000"/><path d="M12 7v8M12 17v2" stroke="#000" stroke-width="1.500"/></svg>
<div class="mono" style="left:352px;top:983px;font-size:11.700px;line-height:16px">&lt;M1&gt; - Select first area corner</div>
<div style="left:1840px;top:975px;width:37px;height:32px;background:#3e7a70"></div>
<div style="left:1845px;top:977px;width:32px;height:28px;background:#50c8ac;border:2px solid;border-color:#a9ecdc #3e7a70 #3e7a70 #a9ecdc"></div>
<div class="mono" style="left:1853px;top:983px;font-size:13px;line-height:16px;letter-spacing:.5px">MM</div>

</body></html>
